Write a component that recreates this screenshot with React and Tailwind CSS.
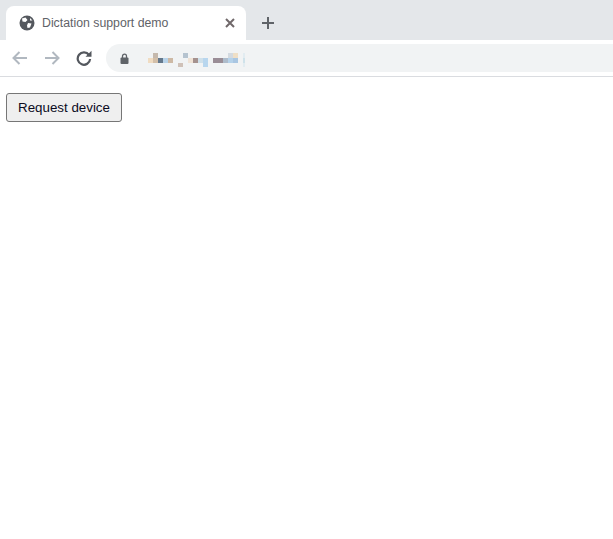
const pixels = [
  [148, 58, 5, 5, "#f0dcc2"], [153, 53, 5, 5, "#c5b9ad"], [153, 58, 5, 5, "#d3bfa9"],
  [158, 58, 5, 5, "#64788c"], [163, 58, 5, 5, "#b8d3e9"], [168, 58, 5, 5, "#cdb9a5"],
  [178, 63, 5, 4, "#cfc1b8"], [183, 53, 5, 5, "#b5c3cf"], [188, 58, 5, 5, "#f0e3d6"],
  [193, 58, 5, 5, "#a5928f"], [198, 58, 5, 5, "#cfe0ea"], [203, 58, 5, 9, "#b8d6ee"],
  [213, 58, 10, 5, "#9a8d96"], [223, 58, 5, 5, "#aebccb"], [228, 53, 5, 5, "#d3dae1"],
  [228, 58, 5, 5, "#b5d2ea"], [233, 53, 5, 5, "#efdfc6"], [233, 58, 5, 5, "#a9c6e2"],
  [243, 53, 2, 14, "#e2ecf1"], [243, 58, 2, 5, "#cfe2ea"],
];

export default function App() {
  return (
    <div className="min-h-[539px] bg-white font-['Liberation_Sans',Arial,sans-serif] overflow-hidden">
      {/* tab strip */}
      <div className="h-10 bg-[#e4e7ea] flex items-end pl-1.5">
        <div className="w-60 h-[34px] bg-white rounded-t-lg flex items-center pl-[13px] pr-2">
          <svg width="16" height="16" viewBox="0 0 16 16" className="shrink-0">
            <circle cx="8" cy="8" r="7.5" fill="#54585e" />
            <path d="M3 3.5 L6.5 2.5 L8.5 5 L6.5 7 L3.5 6.5 Z M9 8 L12.5 8.5 L11 12.5 L8.5 13 L8 10.5 Z M11 3 L13.5 5.5 L11 5.5 Z" fill="#fff" />
          </svg>
          <span className="ml-[7px] text-[12.3px] text-[#5f6368] whitespace-nowrap flex-1">Dictation support demo</span>
          <svg width="10" height="10" viewBox="0 0 10 10" className="mr-[3px]">
            <path d="M1 1 L9 9 M9 1 L1 9" stroke="#70686a" strokeWidth="2" />
          </svg>
        </div>
        <svg width="12" height="12" viewBox="0 0 12 12" className="ml-4 mb-[11px]">
          <path d="M6 0 V12 M0 6 H12" stroke="#5f6368" strokeWidth="2" />
        </svg>
      </div>

      {/* toolbar */}
      <div className="h-[37px] border-b border-[#dadce0] flex items-start pt-1 relative">
        <div className="flex items-center h-7 pl-3">
          <svg width="16" height="14" viewBox="0 0 16 14">
            <path d="M15 7 H2 M7.5 1 L1.5 7 L7.5 13" fill="none" stroke="#b1b8c0" strokeWidth="2" />
          </svg>
          <svg width="16" height="14" viewBox="0 0 16 14" className="ml-4">
            <path d="M1 7 H14 M8.5 1 L14.5 7 L8.5 13" fill="none" stroke="#b1b8c0" strokeWidth="2" />
          </svg>
          <svg width="16" height="16" viewBox="0 0 16 16" className="ml-4">
            <path d="M13 5 A6.2 6.2 0 1 0 14.1 9" fill="none" stroke="#54585e" strokeWidth="2.2" />
            <path d="M9.5 6.8 H15.5 V0.8 Z" fill="#54585e" />
          </svg>
        </div>
        <div className="ml-[14px] flex-1 h-7 bg-[#f1f3f4] rounded-l-[14px] flex items-center pl-[14px]">
          <svg width="9" height="11" viewBox="0 0 9 11">
            <path d="M2.5 5 V3.2 A2 2 0 0 1 6.5 3.2 V5" fill="none" stroke="#5f6368" strokeWidth="1.3" />
            <rect x="0.5" y="4.5" width="8" height="6.5" rx="1" fill="#5f6368" />
          </svg>
        </div>
        {/* blurred address, drawn as a pixel mosaic */}
        <svg width="613" height="76" className="absolute left-0 -top-10 pointer-events-none">
          {pixels.map(([x, y, w, h, c], i) => (
            <rect key={i} x={x} y={y} width={w} height={h} fill={c} />
          ))}
        </svg>
      </div>

      {/* page */}
      <div className="pl-1.5 pt-4">
        <button className="w-[116px] h-[29px] bg-[#efefef] border border-[#767676] rounded-[3px] text-[13.33px] text-[#0b0b1e]">
          Request device
        </button>
      </div>
    </div>
  );
}
